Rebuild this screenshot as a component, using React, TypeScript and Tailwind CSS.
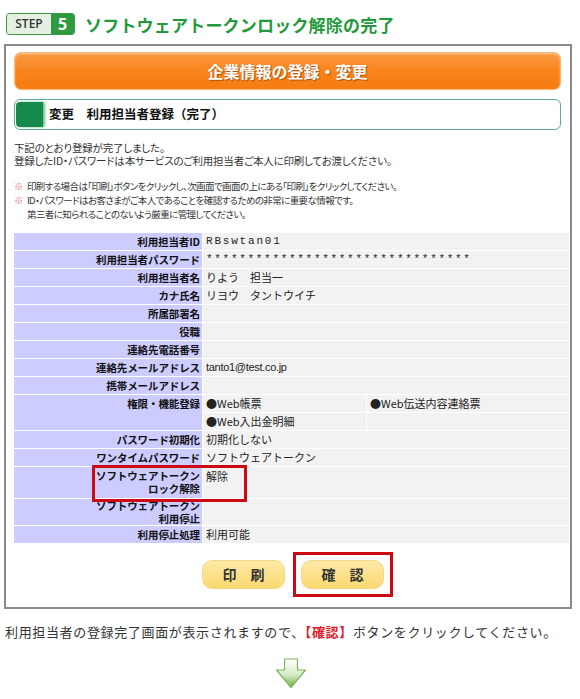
import React from 'react';

const jp = "font-['Noto_Sans_CJK_JP','Noto_Sans',sans-serif]";

type Row = { label: string[]; value?: React.ReactNode; h?: string };

const rows: Row[] = [
  { label: ['利用担当者ID'], value: <span className="font-['Liberation_Mono',monospace] tracking-[1.8px]">RBswtan01</span> },
  { label: ['利用担当者パスワード'], value: <span className="font-['Liberation_Mono',monospace] tracking-[1.7px]">{'*'.repeat(32)}</span> },
  { label: ['利用担当者名'], value: 'りよう　担当一' },
  { label: ['カナ氏名'], value: 'リヨウ　タントウイチ' },
  { label: ['所属部署名'] },
  { label: ['役職'] },
  { label: ['連絡先電話番号'] },
  { label: ['連絡先メールアドレス'], value: <span className="font-['Liberation_Sans',sans-serif] tracking-[-0.3px]">tanto1@test.co.jp</span> },
  { label: ['携帯メールアドレス'] },
];

const rowsAfter: Row[] = [
  { label: ['パスワード初期化'], value: '初期化しない' },
  { label: ['ワンタイムパスワード'], value: 'ソフトウェアトークン' },
];

const Label = ({ lines, className = '' }: { lines: string[]; className?: string }) => (
  <div className={`bg-[#ccccff] text-right pr-[2px] font-bold text-[10.5px] leading-[13px] text-[#111] tracking-[-0.1px] ${className}`}>
    {lines.map((l) => (
      <div key={l}>{l}</div>
    ))}
  </div>
);

const Value = ({ children, className = '' }: { children?: React.ReactNode; className?: string }) => (
  <div className={`bg-[#f2f2f2] pl-[3px] text-[11px] text-[#222] ${className}`}>{children}</div>
);

const SimpleRow = ({ row }: { row: Row }) => (
  <>
    <Label lines={row.label} className="h-[17px] flex items-center justify-end" />
    <Value className="h-[17px] flex items-center">{row.value}</Value>
  </>
);

const DownArrow = () => (
  <svg width="32" height="31" viewBox="0 0 32 31">
    <defs>
      <linearGradient id="ag" x1="0" y1="0" x2="0" y2="1">
        <stop offset="0" stopColor="#ffffff" />
        <stop offset="0.55" stopColor="#d6ebc6" />
        <stop offset="1" stopColor="#6fae4c" />
      </linearGradient>
    </defs>
    <path d="M9.5 1 H22.5 V12 H30.5 L16 29.5 L1.5 12 H9.5 Z" fill="url(#ag)" stroke="#7cb65a" strokeWidth="1.2" strokeLinejoin="round" />
  </svg>
);

const App: React.FC = () => {
  return (
    <div className={`w-[580px] h-[699px] bg-white overflow-hidden ${jp}`}>
      {/* Step heading */}
      <div className="flex items-center pt-[12px] pl-[6px] h-[24px] box-content">
        <div className="flex h-[22px] border border-[#3a9a46] rounded-[3px] overflow-hidden">
          <div className="w-[44px] bg-[#e4f1e2] text-[#333] text-[12px] font-semibold flex items-center justify-center font-['Open_Sans',sans-serif]">
            STEP
          </div>
          <div className="w-[23px] bg-[#2f9a3f] text-white text-[16px] font-bold flex items-center justify-center font-['Open_Sans',sans-serif]">
            5
          </div>
        </div>
        <div className="ml-[10px] text-[17px] font-bold text-[#22993a] leading-none tracking-[0.2px]">
          ソフトウェアトークンロック解除の完了
        </div>
      </div>

      {/* Screen frame */}
      <div className="mt-[8px] ml-[4px] w-[568px] h-[565px] border-2 border-[#8a8a8a] pt-[6px] pl-[8px] pr-[9px]">
        <div className="h-[38px] rounded-[7px] border border-[#f5b878] bg-gradient-to-b from-[#fb9a40] via-[#f8841c] to-[#f67c10] flex items-center justify-center shadow-[inset_0_1px_2px_rgba(255,255,255,0.5)]">
          <span className="text-white text-[16px] font-bold [text-shadow:1px_1px_1px_rgba(120,50,0,0.6)]">
            企業情報の登録・変更
          </span>
        </div>

        <div className="mt-[9px] h-[31px] rounded-[6px] border border-[#5cb08f] flex items-center overflow-hidden pl-[1px]">
          <div className="w-[27px] h-[25px] bg-[#168a4a] rounded-l-[4px] shadow-[2px_0_3px_rgba(22,138,74,0.6)]" />
          <span className="ml-[6px] text-[12.5px] font-bold text-[#111]">変更　利用担当者登録（完了）</span>
        </div>

        <div className="mt-[11px] text-[10.5px] leading-[13px] text-[#333] [font-feature-settings:'palt'] tracking-[-0.2px]">
          <div>下記のとおり登録が完了しました。</div>
          <div>登録したID・パスワードは本サービスのご利用担当者ご本人に印刷してお渡しください。</div>
        </div>

        <div className="mt-[12px] text-[9.5px] leading-[14px] text-[#333] [font-feature-settings:'palt'] tracking-[-0.6px]">
          <div>
            <span className="text-[#e2767a] mr-[4px]">※</span>印刷する場合は「印刷」ボタンをクリックし、次画面で画面の上にある「印刷」をクリックしてください。
          </div>
          <div>
            <span className="text-[#e2767a] mr-[4px]">※</span>ID・パスワードはお客さまがご本人であることを確認するための非常に重要な情報です。
          </div>
          <div className="pl-[13px]">第三者に知られることのないよう厳重に管理してください。</div>
        </div>

        {/* Detail table */}
        <div className="mt-[12px] mr-[-8px] grid grid-cols-[188px_1fr] gap-px bg-white">
          {rows.map((r) => (
            <SimpleRow key={r.label[0]} row={r} />
          ))}

          <Label lines={['権限・機能登録']} className="pt-[2px]" />
          <div className="grid grid-cols-[163px_1fr] gap-px">
            <Value className="h-[17px] flex items-center">●Web帳票</Value>
            <Value className="h-[17px] flex items-center">●Web伝送内容連絡票</Value>
            <Value className="h-[17px] flex items-center">●Web入出金明細</Value>
            <Value className="h-[17px]" />
          </div>

          {rowsAfter.map((r) => (
            <SimpleRow key={r.label[0]} row={r} />
          ))}

          <div className="relative h-[31px]">
            <Label lines={['ソフトウェアトークン', 'ロック解除']} className="h-full pt-[2px]" />
            <div className="absolute left-[78px] top-[-2px] w-[155px] h-[37px] border-[3px] border-[#cc0a14] z-10" />
          </div>
          <Value className="h-[31px] pt-[2px] leading-[14px]">解除</Value>

          <Label lines={['ソフトウェアトークン', '利用停止']} className="h-[26px]" />
          <Value className="h-[26px]" />

          <SimpleRow row={{ label: ['利用停止処理'], value: '利用可能' }} />
        </div>

        {/* Buttons */}
        <div className="mt-[17px] pl-[11px] flex justify-center gap-[16px]">
          <button className="w-[83px] h-[29px] rounded-[10px] border border-[#f3d687] bg-gradient-to-b from-[#fdeaa6] to-[#fbd970] text-[14px] font-bold text-[#333] tracking-[14px] pl-[14px]">
            印刷
          </button>
          <div className="relative">
            <button className="w-[83px] h-[29px] rounded-[10px] border border-[#f3d687] bg-gradient-to-b from-[#fdeaa6] to-[#fbd970] text-[14px] font-bold text-[#333] tracking-[14px] pl-[14px]">
              確認
            </button>
            <div className="absolute left-[-8px] top-[-8px] right-[-9px] bottom-[-8px] border-[3px] border-[#cc0a14]" />
          </div>
        </div>
      </div>

      <p className="mt-[14px] pl-[5px] text-[13px] leading-[18px] text-[#333] tracking-[0.65px]">
        利用担当者の登録完了画面が表示されますので、<span className="text-[#e0202a] font-bold">【確認】</span>ボタンをクリックしてください。
      </p>

      <div className="mt-[17px] flex justify-center pl-[2px]">
        <DownArrow />
      </div>
    </div>
  );
};

export default App;
